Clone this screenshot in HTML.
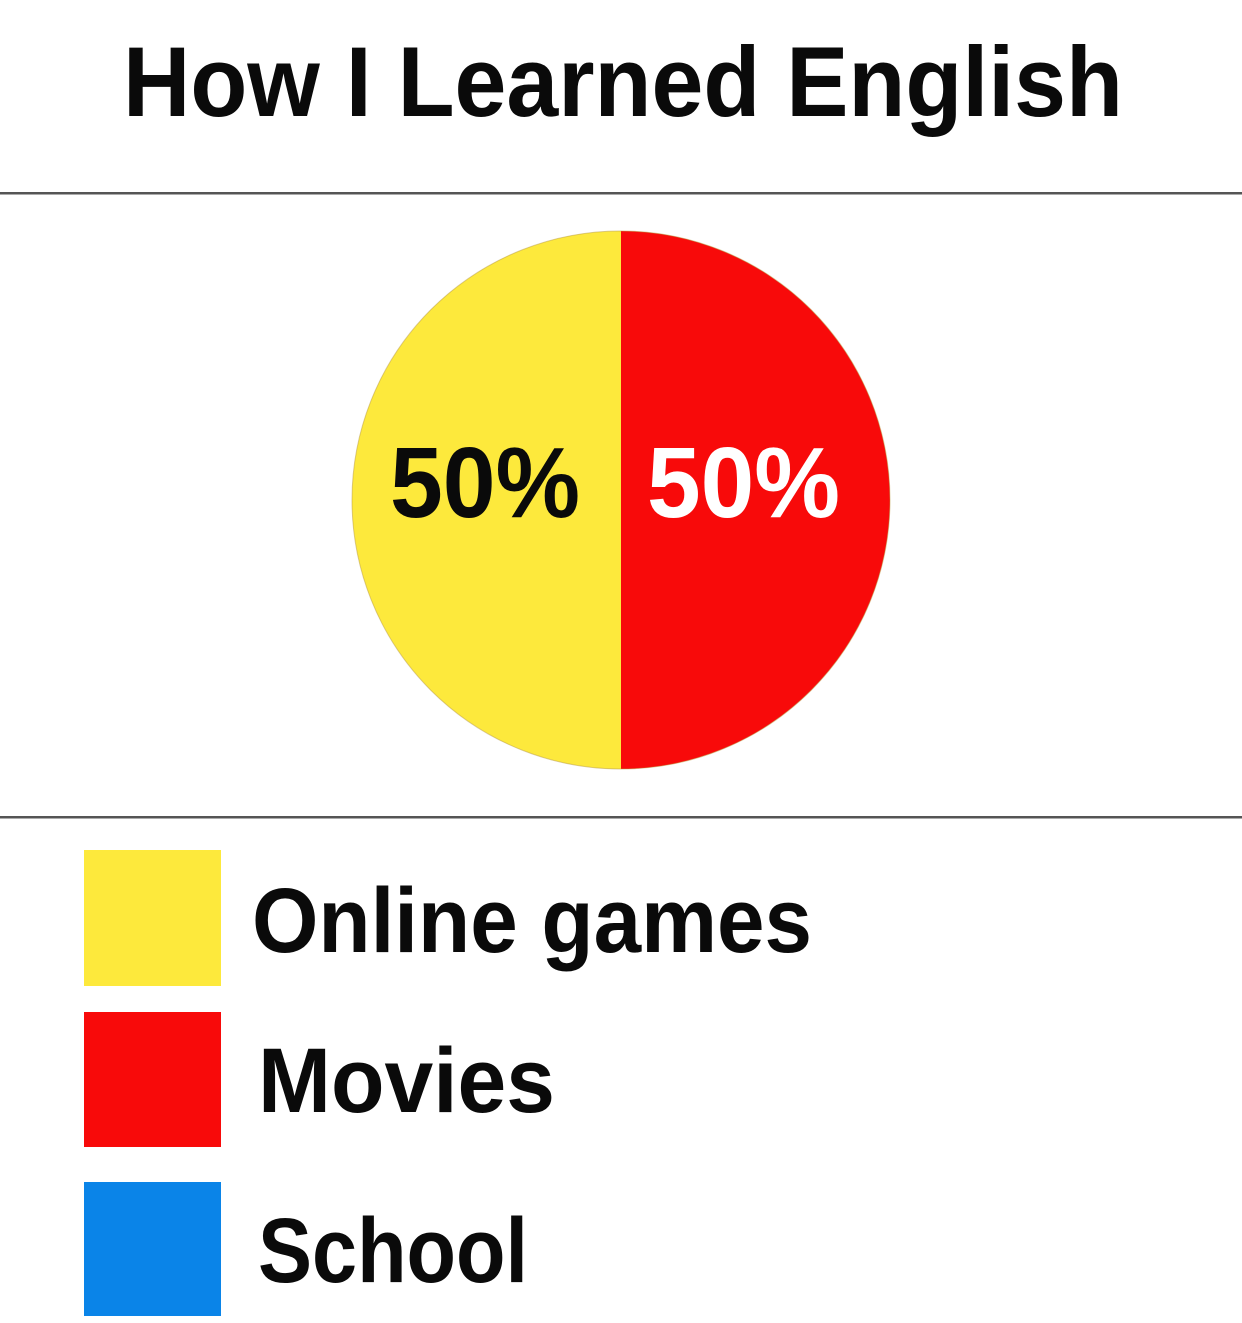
<!DOCTYPE html>
<html><head><meta charset="utf-8"><style>
html,body{margin:0;padding:0;background:#fff;}
svg{display:block;}
text{font-family:"Liberation Sans",sans-serif;font-weight:bold;}
</style></head><body>
<svg width="1242" height="1323" viewBox="0 0 1242 1323" xmlns="http://www.w3.org/2000/svg">
<rect width="1242" height="1323" fill="#fff"/>
<text x="123" y="116" font-size="99" fill="#0a0a0a" textLength="1000" lengthAdjust="spacingAndGlyphs">How I Learned English</text>
<rect x="0" y="192" width="1242" height="2.5" fill="#555"/>
<path d="M621,231 A269,269 0 0,0 621,769 Z" fill="#fde93c"/>
<path d="M621,231 A269,269 0 0,1 621,769 Z" fill="#f80a0a"/>
<circle cx="621" cy="500" r="269" fill="none" stroke="#b89a40" stroke-width="1" opacity="0.5"/>
<text x="390" y="517" font-size="100" fill="#0a0a0a" textLength="190" lengthAdjust="spacingAndGlyphs">50%</text>
<text x="647" y="517" font-size="100" fill="#fff" textLength="193" lengthAdjust="spacingAndGlyphs">50%</text>
<rect x="0" y="816" width="1242" height="2.5" fill="#555"/>
<rect x="84" y="850" width="137" height="136" fill="#fde93c"/>
<rect x="84" y="1012" width="137" height="135" fill="#f80a0a"/>
<rect x="84" y="1182" width="137" height="134" fill="#0a84e8"/>
<text x="252" y="952" font-size="92" fill="#0a0a0a" textLength="560" lengthAdjust="spacingAndGlyphs">Online games</text>
<text x="258" y="1112" font-size="92" fill="#0a0a0a" textLength="297" lengthAdjust="spacingAndGlyphs">Movies</text>
<text x="258" y="1282" font-size="92" fill="#0a0a0a" textLength="270" lengthAdjust="spacingAndGlyphs">School</text>
</svg>
</body></html>
